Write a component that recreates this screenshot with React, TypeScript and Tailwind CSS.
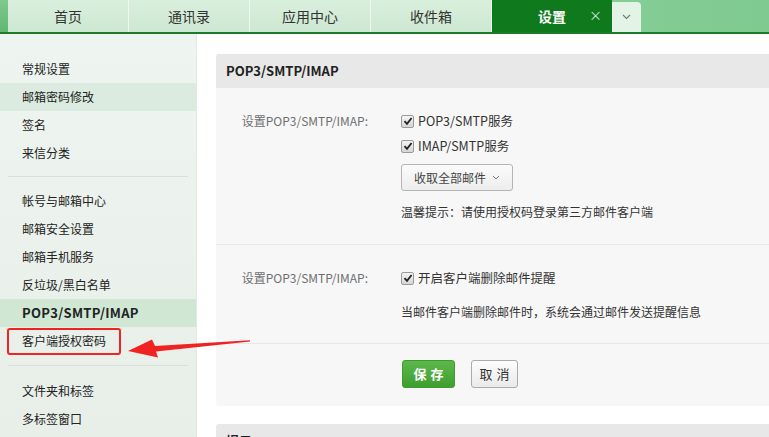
import React from "react";

const font = { fontFamily: '"Noto Sans CJK SC", "Noto Sans", sans-serif' };

function Check() {
  return (
    <span className="relative inline-flex h-[13px] w-[13px] shrink-0 items-center justify-center rounded-[2px] border border-[#9a9a9a] bg-gradient-to-b from-[#f4f4f4] to-[#d6d6d6]">
      <svg width="10" height="10" viewBox="0 0 10 10">
        <path d="M1.5 5.2 L4 7.8 L8.6 2" fill="none" stroke="#222" strokeWidth="1.8" />
      </svg>
    </span>
  );
}

const tabs = ["首页", "通讯录", "应用中心", "收件箱"];

function SideItem({ text, active, hover, bold, boxed }: { text: string; active?: boolean; hover?: boolean; bold?: boolean; boxed?: boolean }) {
  return (
    <div
      className={
        "relative flex h-[28px] items-center pl-[22px] text-[12px] text-[#222] " +
        (active ? "bg-[#cfe7d3] " : hover ? "bg-[#dcebdf] " : "") +
        (bold ? "font-bold text-[13px] tracking-[0.3px]" : "")
      }
    >
      {text}
      {boxed && (
        <div className="absolute left-[7px] top-[1px] h-[27px] w-[114px] rounded-[3px] border-2 border-[#f02222]" />
      )}
    </div>
  );
}

export default function App() {
  return (
    <div className="relative flex h-[437px] w-[769px] flex-col overflow-hidden bg-white" style={font}>
      {/* top bar */}
      <div className="flex h-[34px] shrink-0 border-b-2 border-[#1d7a2a] bg-gradient-to-r from-[#9ad8a9] to-[#7fca91]">
        <div className="w-[8px] shrink-0 bg-gradient-to-b from-[#7fc98d] to-[#5fb872]" />
        {tabs.map((t) => (
          <div
            key={t}
            className="flex h-[32px] w-[121px] shrink-0 items-center justify-center border-r border-[#eef8f0] bg-gradient-to-b from-[#d9efdd] to-[#cde8d2] text-[14px] text-[#333]"
          >
            {t}
          </div>
        ))}
        <div className="relative flex h-[32px] w-[120px] shrink-0 items-center justify-center bg-[#0f7a1d] text-[14px] font-bold text-white">
          设置
          <span className="absolute right-[10px] top-[8px] text-[13px] font-normal leading-[14px] text-[#cfe9d3]">×</span>
        </div>
        <div className="mt-[2px] flex h-[30px] w-[29px] shrink-0 items-center justify-center rounded-tr-[4px] bg-[#e3f3e6]">
          <svg width="9" height="6" viewBox="0 0 9 6">
            <path d="M1 1 L4.5 4.5 L8 1" fill="none" stroke="#777" strokeWidth="1.1" />
          </svg>
        </div>
        <div className="flex-1" />
      </div>

      <div className="flex min-h-0 flex-1">
        {/* sidebar */}
        <div className="w-[197px] shrink-0 border-r border-[#e2eae3] bg-gradient-to-b from-[#eef4ef] to-[#e8efe9] pt-[21px]">
          <SideItem text="常规设置" />
          <SideItem text="邮箱密码修改" hover />
          <SideItem text="签名" />
          <SideItem text="来信分类" />
          <div className="mx-[8px] mb-[10px] mt-[9px] h-px bg-[#d9dfda]" />
          <SideItem text="帐号与邮箱中心" />
          <SideItem text="邮箱安全设置" />
          <SideItem text="邮箱手机服务" />
          <SideItem text="反垃圾/黑白名单" />
          <SideItem text="POP3/SMTP/IMAP" active bold />
          <SideItem text="客户端授权密码" boxed />
          <div className="mx-[8px] mb-[11px] mt-[10px] h-px bg-[#d9dfda]" />
          <SideItem text="文件夹和标签" />
          <SideItem text="多标签窗口" />
        </div>

        {/* main */}
        <div className="min-w-0 flex-1 pl-[19px] pt-[20px]">
          <div className="-mr-[10px] rounded-[3px] bg-[#f7f7f7]">
            <div className="flex h-[34px] items-center rounded-t-[3px] bg-[#e8e8e8] pl-[10px] text-[13px] font-bold text-[#222]">
              POP3/SMTP/IMAP
            </div>
            {/* section 1 */}
            <div className="flex border-b border-[#e6e6e6] pb-[23px] pt-[24px] text-[12px]">
              <div className="w-[152px] shrink-0 text-right leading-[18px] text-[#6f6f6f]">设置POP3/SMTP/IMAP:</div>
              <div className="ml-[33px] flex flex-col text-[#333]">
                <div className="flex h-[18px] items-center gap-[4px]">
                  <Check />
                  <span className="text-[12.5px]">POP3/SMTP服务</span>
                </div>
                <div className="mt-[7px] flex h-[18px] items-center gap-[4px]">
                  <Check />
                  <span className="text-[12.5px]">IMAP/SMTP服务</span>
                </div>
                <div className="mt-[9px] flex h-[27px] w-fit items-center gap-[6px] whitespace-nowrap rounded-[3px] border border-[#b4b4b4] bg-gradient-to-b from-[#fbfbfb] to-[#ededed] px-[12px] text-[12px] text-[#444]">
                  收取全部邮件
                  <svg width="8" height="5" viewBox="0 0 8 5">
                    <path d="M1 1 L4 4 L7 1" fill="none" stroke="#777" strokeWidth="1" />
                  </svg>
                </div>
                <div className="mt-[12px] leading-[18px]">温馨提示：请使用授权码登录第三方邮件客户端</div>
              </div>
            </div>
            {/* section 2 */}
            <div className="flex border-b border-[#e6e6e6] pb-[22px] pt-[24px] text-[12px]">
              <div className="w-[152px] shrink-0 text-right leading-[18px] text-[#6f6f6f]">设置POP3/SMTP/IMAP:</div>
              <div className="ml-[33px] flex flex-col text-[#333]">
                <div className="flex h-[18px] items-center gap-[4px]">
                  <Check />
                  <span className="text-[12.5px]">开启客户端删除邮件提醒</span>
                </div>
                <div className="mt-[16px] leading-[18px]">当邮件客户端删除邮件时，系统会通过邮件发送提醒信息</div>
              </div>
            </div>
            {/* buttons */}
            <div className="flex gap-[6px] pb-[18px] pl-[186px] pt-[16px]">
              <div className="flex h-[28px] w-[53px] items-center justify-center rounded-[3px] border border-[#3f9a30] bg-gradient-to-b from-[#5cb84a] to-[#3f9e31] text-[13px] font-bold tracking-[4px] text-white">
                <span className="pl-[4px]">保存</span>
              </div>
              <div className="ml-[10px] flex h-[28px] w-[47px] items-center justify-center rounded-[3px] border border-[#ababab] bg-gradient-to-b from-[#fdfdfd] to-[#eaeaea] text-[13px] tracking-[4px] text-[#333]">
                <span className="pl-[4px]">取消</span>
              </div>
            </div>
          </div>
          <div className="-mr-[10px] mt-[18px] flex h-[34px] items-center rounded-t-[3px] bg-[#e8e8e8] pl-[10px] text-[13px] font-bold text-[#222]">
            提示
          </div>
        </div>
      </div>

      {/* red arrow */}
      <svg className="pointer-events-none absolute left-0 top-0" width="769" height="437" viewBox="0 0 769 437">
        <polygon points="250,340.2 250,341.6 156,351.5 158,357.5 128,351 152,339.5 155,346" fill="#f02222" />
      </svg>
    </div>
  );
}
